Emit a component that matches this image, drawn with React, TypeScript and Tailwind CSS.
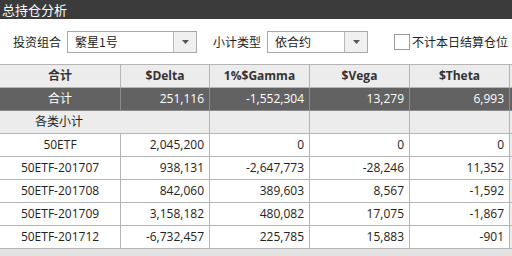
import React from 'react';

const cn = '"Noto Sans CJK SC", sans-serif';

const rows: [string, string, string, string, string][] = [
  ['50ETF', '2,045,200', '0', '0', '0'],
  ['50ETF-201707', '938,131', '-2,647,773', '-28,246', '11,352'],
  ['50ETF-201708', '842,060', '389,603', '8,567', '-1,592'],
  ['50ETF-201709', '3,158,182', '480,082', '17,075', '-1,867'],
  ['50ETF-201712', '-6,732,457', '225,785', '15,883', '-901'],
];

const gridCols = 'grid grid-cols-[121px_89px_100px_100px_100px_1fr]';

const Combo: React.FC<{ value: string; width: string }> = ({ value, width }) => (
  <div className={`flex h-[22px] ${width} border border-[#a9a9a9] bg-white`}>
    <div className="flex-1 pl-[7px] leading-[20px] text-[12px] text-[#222]">{value}</div>
    <div className="w-[23px] border-l border-[#b8b8b8] bg-[#f0f0f0] flex items-center justify-center">
      <svg width="7" height="4" viewBox="0 0 7 4"><path d="M0 0h7L3.5 4z" fill="#555" /></svg>
    </div>
  </div>
);

export default function App() {
  return (
    <div className="w-[512px] h-[256px] bg-white overflow-hidden flex flex-col" style={{ fontFamily: cn }}>
      {/* title */}
      <div className="h-[19px] bg-[#3b3b3b] text-white text-[13px] leading-[19px] pl-[2px] shrink-0">总持仓分析</div>

      {/* controls */}
      <div className="h-[45px] flex items-center text-[12px] text-[#222] shrink-0 pt-[1px]">
        <span className="ml-[13px] mr-[6px]">投资组合</span>
        <Combo value="繁星1号" width="w-[130px]" />
        <span className="ml-[16px] mr-[6px]">小计类型</span>
        <Combo value="依合约" width="w-[101px]" />
        <div className="ml-[26px] w-[16px] h-[16px] border border-[#9a9a9a] bg-white" />
        <span className="ml-[2px]">不计本日结算仓位</span>
      </div>

      {/* table */}
      <div className="border-t border-[#b5b5b5] flex-1 bg-[#e2e2e2] text-[12px]" style={{ fontFamily: '"Open Sans", "Noto Sans CJK SC", sans-serif' }}>
        <div className={`${gridCols} h-[23px] bg-[#ececec] font-bold text-[#333]`}>
          {['合计', '$Delta', '1%$Gamma', '$Vega', '$Theta'].map((h) => (
            <div key={h} className="border-r border-b border-[#b5b5b5] flex items-center justify-center">{h}</div>
          ))}
          <div className="border-b border-[#b5b5b5]" />
        </div>

        <div className={`${gridCols} h-[23px] bg-[#626262] text-white`}>
          <div className="border-r border-b border-[#8c8c8c] flex items-center justify-center">合计</div>
          {['251,116', '-1,552,304', '13,279', '6,993'].map((v) => (
            <div key={v} className="border-r border-b border-[#8c8c8c] flex items-center justify-end pr-[5px]">{v}</div>
          ))}
          <div className="border-b border-[#8c8c8c]" />
        </div>

        <div className={`${gridCols} h-[23px] bg-[#ececec] text-[#222]`}>
          <div className="col-span-2 border-r border-b border-[#b5b5b5] flex items-center pl-[35px]">各类小计</div>
          <div className="border-r border-b border-[#b5b5b5]" />
          <div className="border-r border-b border-[#b5b5b5]" />
          <div className="border-r border-b border-[#b5b5b5]" />
          <div className="border-b border-[#b5b5b5]" />
        </div>

        {rows.map((r) => (
          <div key={r[0]} className={`${gridCols} h-[23px] text-[#222]`}>
            <div className="bg-white border-r border-b border-[#b5b5b5] flex items-center justify-center">{r[0]}</div>
            {r.slice(1).map((v, i) => (
              <div key={i} className="bg-white border-r border-b border-[#b5b5b5] flex items-center justify-end pr-[5px]">{v}</div>
            ))}
            <div className="bg-[#ececec] border-b border-[#b5b5b5]" />
          </div>
        ))}
      </div>
    </div>
  );
}
